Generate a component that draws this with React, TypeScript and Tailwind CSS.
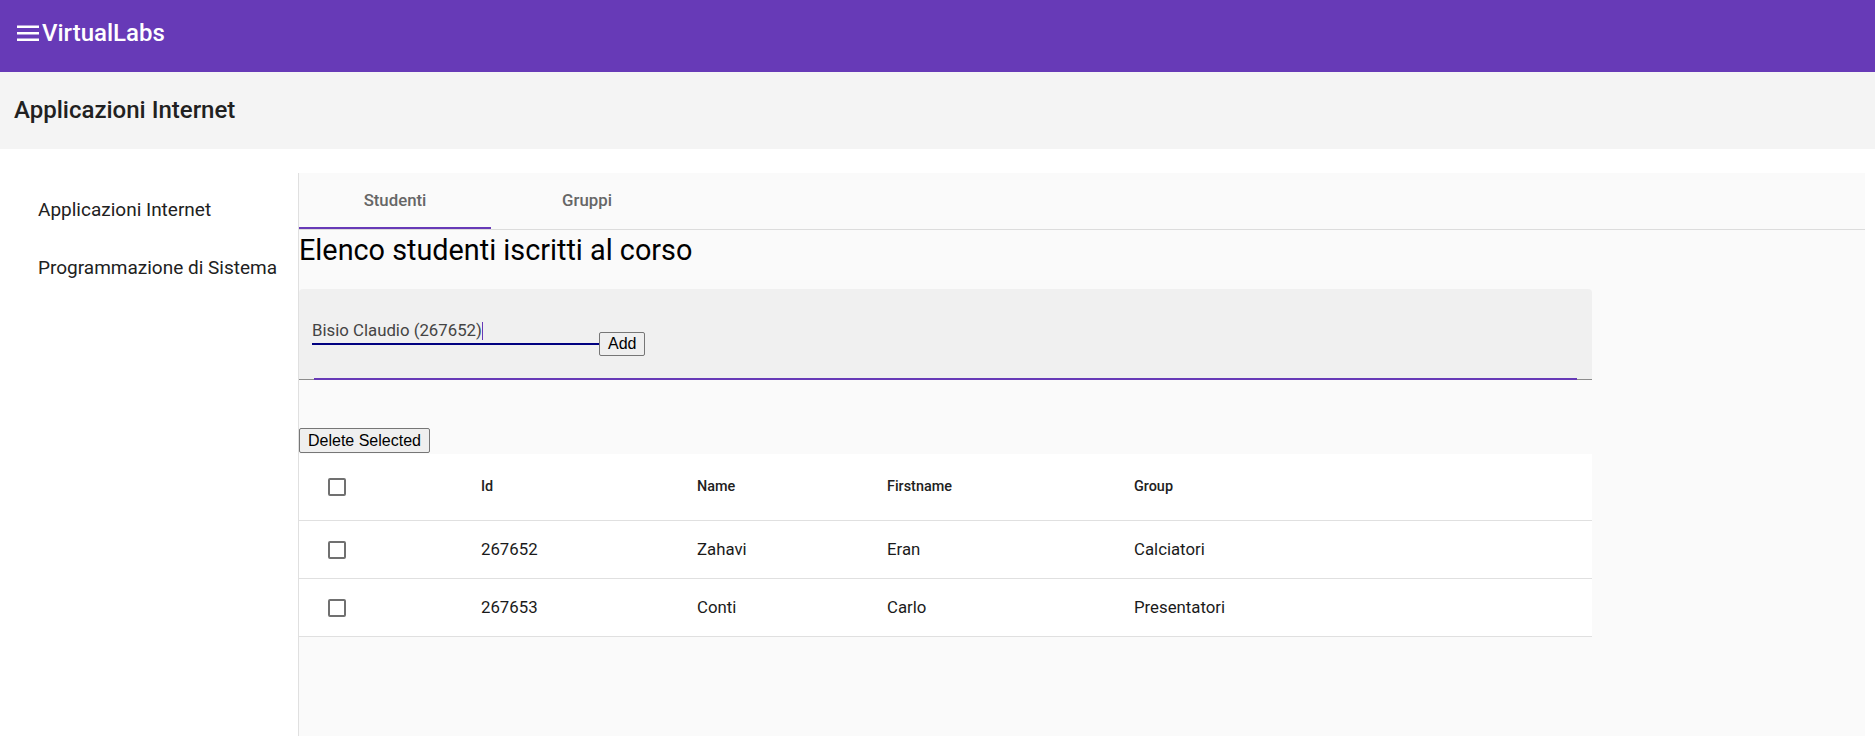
import React from "react";

function App() {
  const courses = ["Applicazioni Internet", "Programmazione di Sistema"];

  const students = [
    { id: "267652", name: "Zahavi", firstname: "Eran", group: "Calciatori" },
    { id: "267653", name: "Conti", firstname: "Carlo", group: "Presentatori" },
  ];

  return (
    <div className="min-h-screen flex flex-col bg-white font-['Roboto',sans-serif]">
      {/* top toolbar */}
      <div className="h-[72px] bg-[#673ab7] flex items-start pl-[17px] pt-[19px] text-white">
        <svg width="22" height="16" viewBox="0 0 22 16" className="mt-[6px]">
          <rect x="0" y="0.5" width="22" height="2.5" fill="white" />
          <rect x="0" y="7" width="22" height="2.5" fill="white" />
          <rect x="0" y="13.5" width="22" height="2.5" fill="white" />
        </svg>
        <span className="ml-[3px] text-[24px] leading-[28px] font-medium">VirtualLabs</span>
      </div>

      {/* course title bar */}
      <div className="h-[77px] bg-[#f4f4f4] pl-[14px] pt-[24px]">
        <h1 className="text-[24px] leading-[28px] font-medium text-[#212121]">Applicazioni Internet</h1>
      </div>

      <div className="flex-1 flex mt-[24px]">
        {/* sidebar */}
        <div className="w-[299px] border-r border-[#e0e0e0] pt-[8px] flex flex-col">
          {courses.map((c) => (
            <div key={c} className="h-[58px] flex items-center pl-[38px] text-[19px] text-[#212121]">
              {c}
            </div>
          ))}
        </div>

        {/* main panel */}
        <div className="flex-1 mr-[10px] bg-[#fafafa] flex flex-col">
          <div className="h-[57px] border-b border-[#dcdcdc] flex">
            <div className="w-[192px] h-full flex items-center justify-center pt-[2px] border-b-2 border-[#673ab7] text-[16.8px] font-medium text-[#666]">
              Studenti
            </div>
            <div className="w-[192px] h-full flex items-center justify-center text-[16.8px] font-medium text-[#666]">
              Gruppi
            </div>
          </div>

          <div className="flex flex-col items-start">
            <h2 className="mt-[2px] text-[28.8px] leading-[36px] text-black">Elenco studenti iscritti al corso</h2>

            {/* add student form */}
            <div className="mt-[21px] w-[1293px] h-[91px] bg-[#f0f0f0] rounded-t-[4px] flex flex-col">
              <div className="flex-1 flex items-start pl-[13px] pt-[29px]">
                <div className="w-[287px] h-[27px] border-b-2 border-[#000080] flex items-center">
                  <span className="text-[16.8px] leading-[25px] text-[#444]">Bisio Claudio (267652)</span>
                  <span className="w-px h-[18px] bg-[#673ab7]"></span>
                </div>
                <button className="mt-[14px] h-[24px] px-2 bg-[#efefef] border border-[#767676] rounded-[2px] text-[16px] leading-[20px] text-black font-['Liberation_Sans',Arial,sans-serif]">
                  Add
                </button>
              </div>
              <div className="h-[2px] flex items-end">
                <div className="w-[15px] h-px bg-[#8c8c8c]"></div>
                <div className="flex-1 h-[2px] bg-[#673ab7]"></div>
                <div className="w-[15px] h-px bg-[#8c8c8c]"></div>
              </div>
            </div>

            <button className="mt-[48px] h-[25px] px-2 bg-[#efefef] border border-[#767676] rounded-[2px] text-[16px] leading-[20px] text-black font-['Liberation_Sans',Arial,sans-serif]">
              Delete Selected
            </button>

            {/* students table */}
            <div className="mt-px w-[1293px] bg-white">
              <div className="h-[67px] border-b border-[#e0e0e0] grid grid-cols-[182px_216px_190px_247px_1fr] items-center text-[14.4px] font-medium text-[#212121]">
                <div className="pl-[29px]">
                  <div className="w-[18px] h-[18px] border-2 border-[#707070] rounded-[2px]"></div>
                </div>
                <div>Id</div>
                <div>Name</div>
                <div>Firstname</div>
                <div>Group</div>
              </div>
              {students.map((s) => (
                <div
                  key={s.id}
                  className="h-[58px] border-b border-[#e0e0e0] grid grid-cols-[182px_216px_190px_247px_1fr] items-center text-[16.8px] text-[#1a1a1a]"
                >
                  <div className="pl-[29px]">
                    <div className="w-[18px] h-[18px] border-2 border-[#707070] rounded-[2px]"></div>
                  </div>
                  <div>{s.id}</div>
                  <div>{s.name}</div>
                  <div>{s.firstname}</div>
                  <div>{s.group}</div>
                </div>
              ))}
            </div>
          </div>
        </div>
      </div>
    </div>
  );
}

export default App;
